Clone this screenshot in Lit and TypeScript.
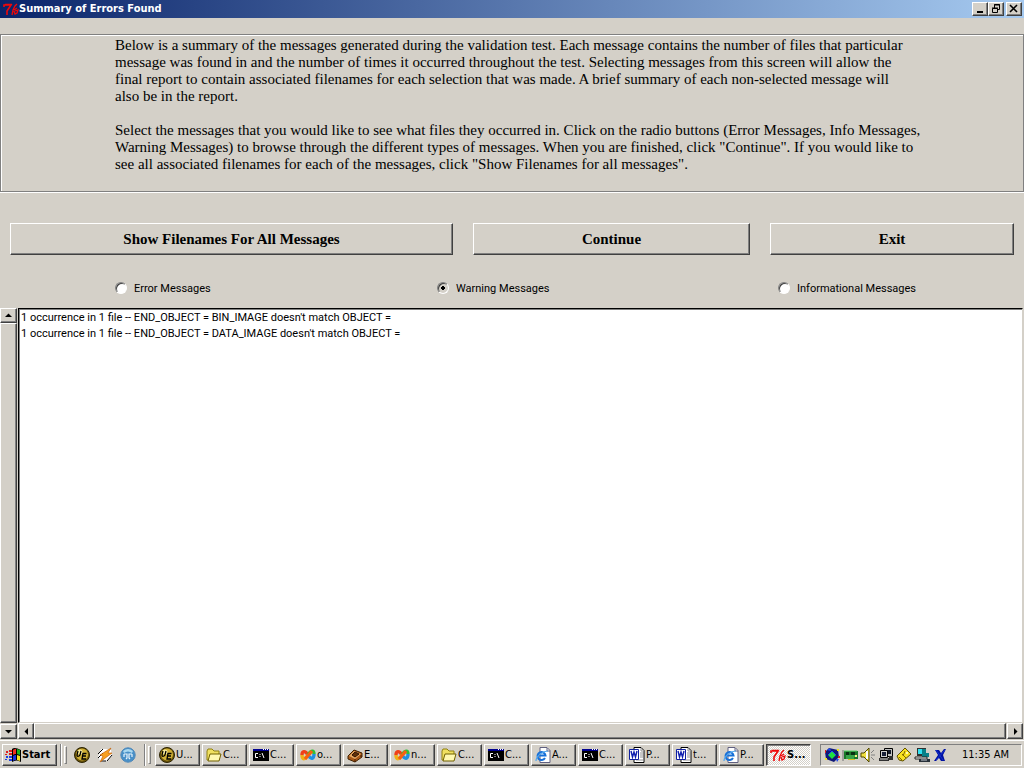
import { LitElement, html, css, svg } from "lit";
import { customElement, property, state } from "lit/decorators.js";

const art: Record<string, unknown> = {
  tk: svg`<path d="M1 6V4h7L6 7L4 10v4M2 3.500h7" fill="none" stroke="#f00808" stroke-width="1.600"/><path d="M14 3l-2 2-2 4-1 5M14 7l-3 2M11 10l1 3 2-1 1-3-3 1" fill="none" stroke="#f00808" stroke-width="1.300"/>`,
  win: svg`<g stroke="none"><path d="M7 2c2-2 5-1 9 1v12c-3-2-6-2-9 0z" fill="#000"/><path d="M8 3c1-1 2-1 3-1v5c-1 0-2 0-3 1z" fill="#f03020"/><path d="M12 2l3 1v5l-3-1z" fill="#18b020"/><path d="M8 9c1-1 2-1 3-1v5c-1 0-2 0-3 1z" fill="#1830e0"/><path d="M12 8l3 1v5l-3-1z" fill="#f8e020"/><path d="M1 4h2v2H1zM4 3h3v2H4zM0 7h2v1H0zM4 6h3v2H4z" fill="#e02020"/><path d="M1 9h2v2H1zM4 9h3v2H4zM0 12h2v1H0zM4 12h3v2H4z" fill="#2040e0"/></g>`,
  ue: svg`<circle cx="8" cy="8" r="7.500" fill="#6a5408" stroke="#2c2404"/><circle cx="8" cy="7.500" r="6" fill="#d0b038"/><circle cx="6" cy="5" r="2.500" fill="#f8eca0"/><path d="M4 4L3 8q0 2 2 1l1-1 1-4M12.500 6.500H9L8 12h4M8.500 9H12" fill="none" stroke="#000" stroke-width="1.300"/>`,
  bolt: svg`<path d="M4 2h5l5 1 1 6-5 5-6 1-3-5z" fill="#fff"/><path d="M6 2L1 7M15 8l-5 6M1 11l5-5M9 14H4" stroke="#000"/><path d="M3 8l11-7-3 5h4L3 15l3-6z" fill="#f8a020" stroke="#c05800" stroke-width=".6"/>`,
  phones: svg`<circle cx="8" cy="8" r="7.200" fill="#4890c8" stroke="#5088b8"/><path d="M3 4q5-4 10 0l-1 2q-4-3-8 0z" fill="#a8d8f0"/><path d="M4 7h3v4l-1 1M12 7H9v4l1 1M4 7v3M12 7v3" fill="none" stroke="#e8f4fc" stroke-width="1.200"/>`,
  folder: svg`<path d="M1 13V4l1-2h4l2 2h5v9z" fill="#f0e060" stroke="#908010"/><path d="M4 7h11l-2 7H2z" fill="#fff8b0" stroke="#706000"/>`,
  cmd: svg`<path d="M0 2h16v12H0z" fill="#000"/><path d="M0 2h16v2H0z" fill="#000090"/><path d="M10 2h1v1h-1zM12 2h1v1h-1zM14 2h1v1h-1z" fill="#fff"/><path d="M5 6.500H2.500v4H5M7 7v1M7 9v1M9 6l2 5" stroke="#fff" fill="none"/>`,
  loop: svg`<g fill="none" stroke-width="3.400"><path d="M8 8C5 3 2 4 2 8" stroke="#f04018"/><path d="M2 8c0 5 3 5 6 0" stroke="#f0b018"/><path d="M8 8c3-5 6-5 6-1" stroke="#30c038"/><path d="M14 7c0 5-3 6-6 1" stroke="#2090e0"/><path d="M5 12l7-8" stroke="#f86010"/></g>`,
  box: svg`<path d="M1 9l6-6 8 3v4l-7 5-7-3z" fill="#a85818" stroke="#402000"/><path d="M2 9l5-5 7 3-6 5z" fill="#e8a860"/><path d="M5 8l3-3 4 2-4 3z" fill="#603008" stroke="#301000"/><path d="M8 12v3M14 8v2" stroke="#401800"/>`,
  ie: svg`<path d="M5 .500h7l3 3v12H5z" fill="#fff" stroke="#606080"/><path d="M12 1v3h3" fill="none" stroke="#606080"/><path d="M10 11a4 4 0 1 1 .500-2.500H3" fill="none" stroke="#1870d8" stroke-width="2"/><path d="M1 14C1 9 8 4 13 4" fill="none" stroke="#50a8f0" stroke-width="1.200"/>`,
  word: svg`<path d="M5 .500h7l3 3v12H5z" fill="#fff" stroke="#000"/><path d="M12 1v3h3M11 6h3M11 8h3M11 10h3M7 13h7" fill="none" stroke="#909090"/><path d="M.500 2.500h9v10h-9z" fill="#fff" stroke="#1020a0"/><path d="M2 4l1.500 6L5 5l1.500 5L8 4" fill="none" stroke="#1020b0" stroke-width="1.400"/>`,
  globe: svg`<path d="M5 1l9 2 1 7-5 5-8-3-1-7z" fill="#101878"/><path d="M8 4l4 4-4 4-4-4z" fill="#20e040"/><path d="M4 8l4-4 4 4" stroke="#2048f0" fill="none"/><path d="M3 3l3-2 1 3zM12 12l3 0-2 3z" fill="#2048f0"/><path d="M13 2h2v2h-2zM1 11h2v2H1z" fill="#f0e820"/><path d="M1 3h1v3H1zM14 9h2v2h-2z" fill="#e02020"/>`,
  card: svg`<path d="M2 4h14v8H2z" fill="#187828"/><path d="M4 5h3v3H4zM9 5h4v3H9z" fill="#083010"/><path d="M2 4h13M4 9h9M4 11h8" stroke="#58d068"/><path d="M1 3v11" stroke="#707070"/><path d="M6 12h7v1H6z" fill="#d8c020"/><path d="M13 8h2v2h-2z" fill="#f8f080"/>`,
  sound: svg`<path d="M1 6h3l5-5v14l-5-5H1z" fill="#f0e040" stroke="#504800"/><path d="M7 4v8" stroke="#fff" stroke-width="2"/><path d="M11 6l3-3M11 8h4M11 10l3 3" stroke="#808080"/>`,
  net: svg`<path d="M6.500 1.500h8v8h-8z" fill="#c0c0c0" stroke="#000"/><path d="M8 3h5v4H8z" fill="#101828"/><path d="M2.500 3.500h7v7h-7z" fill="#d0d0d0" stroke="#000"/><path d="M4 5h4v4H4z" fill="#182038"/><path d="M1 11h10v3H1zM11 9h4v4h-4z" fill="#303030"/><path d="M2 12h8" stroke="#d0d0d0"/>`,
  tag: svg`<path d="M1 9l8-8 6 6-8 7-4-1z" fill="#f8e020" stroke="#605000"/><path d="M3 10l3 3M6 7l4 4M9 4l-2 5" stroke="#806800"/><path d="M10 5h2v2h-2z" fill="#fff8b0"/>`,
  pc: svg`<path d="M3 1h9v8H3z" fill="#303030"/><path d="M4 2h6v5H4z" fill="#30e0f0"/><path d="M8 2h4v4h3v4H8z" fill="#088088"/><path d="M1 10h12v2H1z" fill="#fff" stroke="#202020"/><path d="M5 12h11v3H5z" fill="#283038"/><path d="M7 13h6" stroke="#c0c8d0"/>`,
  cross: svg`<path d="M3 3h4l2 3 3-4h2l-3 6 2 6H9l-2-3-3 3H2l4-6z" fill="#0010a0"/><path d="M4 3l7 10M13 3L4 13" stroke="#1030d0"/>`,
};

@customElement("pixel-icon")
export class PixelIcon extends LitElement {
  @property() name = "";
  static styles = css`
    :host { display: block; flex: none; width: 16px; height: 16px; }
    svg { display: block; width: 100%; height: 100%; }
  `;
  render() {
    return html`<svg viewBox="0 0 16 16" aria-hidden="true">${art[this.name]}</svg>`;
  }
}

const INTRO = [
  `Below is a summary of the messages generated during the validation test. Each message contains the number of files that particular
message was found in and the number of times it occurred throughout the test. Selecting messages from this screen will allow the
final report to contain associated filenames for each selection that was made. A brief summary of each non-selected message will
also be in the report.`,
  `Select the messages that you would like to see what files they occurred in. Click on the radio buttons (Error Messages, Info Messages,
Warning Messages) to browse through the different types of messages. When you are finished, click "Continue". If you would like to
see all associated filenames for each of the messages, click "Show Filenames for all messages".`,
];

const KINDS = ["Error Messages", "Warning Messages", "Informational Messages"];

const MESSAGES: Record<string, string[]> = {
  "Warning Messages": [
    "1 occurrence in 1 file -- END_OBJECT = BIN_IMAGE doesn't match OBJECT =",
    "1 occurrence in 1 file -- END_OBJECT = DATA_IMAGE doesn't match OBJECT =",
  ],
};

const TASKS = [
  ["ue", "U..."], ["folder", "C..."], ["cmd", "C..."], ["loop", "o..."], ["box", "E..."],
  ["loop", "n..."], ["folder", "C..."], ["cmd", "C..."], ["ie", "A..."], ["cmd", "C..."],
  ["word", "P..."], ["word", "t..."], ["ie", "P..."], ["tk", "S..."],
];

const TRAY = ["globe", "card", "sound", "net", "tag", "pc", "cross"];

const arrow = (d: string) => html`<svg class="arrow" viewBox="0 0 7 7" aria-hidden="true"><path d=${d} /></svg>`;

@customElement("app-root")
export class AppRoot extends LitElement {
  @state() private kind = "Warning Messages";

  static styles = css`
    :host {
      display: flex;
      flex-direction: column;
      min-height: 100vh;
      box-sizing: border-box;
      background: #d4d0c8;
      color: #000;
      font: 11px/16px Roboto, "Liberation Sans", Arial, sans-serif;
    }
    * { box-sizing: border-box; }
    button { margin: 0; padding: 0; font: inherit; color: inherit; background: #d4d0c8; }
    .raised {
      border: 1px solid;
      border-color: #fff #404040 #404040 #fff;
      box-shadow: inset -1px -1px #808080;
    }
    .titlebar {
      display: flex;
      align-items: center;
      height: 18px;
      padding: 0 2px 0 3px;
      background: linear-gradient(90deg, #0a246a, #a6caf0);
      color: #fff;
    }
    .title {
      flex: 1;
      margin: 0;
      font: bold 11px/18px "DejaVu Sans Condensed", "DejaVu Sans", sans-serif;
    }
    .caption { display: flex; align-items: center; justify-content: center; width: 16px; height: 14px; }
    .caption svg { width: 10px; height: 10px; display: block; fill: none; stroke: #000; }
    .caption.close { margin-left: 2px; }
    .intro {
      margin-top: 16px;
      padding: 2px 0 18px 114px;
      border: 1px solid #808080;
      box-shadow: inset 1px 1px #fff, 0 1px #fff;
      font: 15px/17px "Liberation Serif", "Times New Roman", serif;
    }
    .intro p { margin: 0 0 17px; white-space: pre-line; }
    .intro p:last-child { margin: 0; }
    .actions {
      display: grid;
      grid-template-columns: 443fr 277fr 244fr;
      gap: 20px;
      margin: 31px 10px 0;
    }
    .action { height: 32px; font: bold 15px/17px "Liberation Serif", "Times New Roman", serif; }
    .kinds {
      display: grid;
      grid-template-columns: 322fr 341fr 246fr;
      margin: 25px 0 11px;
      padding-left: 115px;
    }
    .kind { display: flex; align-items: center; gap: 7px; height: 17px; }
    .radio {
      appearance: none;
      width: 12px;
      height: 12px;
      margin: 0 0 2px;
      border: 1px solid;
      border-color: #808080 #fff #fff #808080;
      border-radius: 50%;
      background: #fff;
      box-shadow: inset 1px 1px #404040;
    }
    .radio:checked { background: radial-gradient(circle at center, #000 2px, #d4d0c8 2px); }
    .viewer {
      flex: 1;
      display: grid;
      grid-template-columns: 18px 1fr;
      grid-template-rows: 1fr 16px;
      min-height: 0;
      padding-right: 1px;
    }
    .vbar { grid-row: 1 / 3; display: flex; flex-direction: column; padding-right: 1px; }
    .hbar { display: flex; }
    .step { display: flex; flex: none; align-items: center; justify-content: center; width: 16px; height: 16px; }
    .vbar .step { width: 17px; height: 15px; }
    .thumb { flex: 1; }
    .hbar .thumb { margin-right: 1px; }
    .vbar .thumb { margin-bottom: 1px; }
    .arrow { width: 7px; height: 7px; display: block; }
    .list {
      appearance: none;
      width: 100%;
      height: 100%;
      margin: 0;
      padding: 1px 1px 0;
      overflow: hidden;
      outline: 0;
      border: 1px solid;
      border-color: #000 #d4d0c8 #d4d0c8 #000;
      border-radius: 0;
      background: #fff;
      box-shadow: inset 1px 1px #808080;
      font: inherit;
      color: #000;
    }
    .option { height: 16px; min-height: 16px; padding: 1px 1px 0; line-height: 16px; font-size: 11px; }
    .taskbar {
      display: flex;
      align-items: center;
      gap: 2px;
      height: 28px;
      margin-top: 1px;
      padding: 2px 2px 1px;
      border-top: 1px solid #fff;
      font: 11px/16px "DejaVu Sans Condensed", "DejaVu Sans", sans-serif;
    }
    .start { display: flex; align-items: center; gap: 1px; width: 55px; height: 22px; padding: 0 2px; font-weight: bold; }
    .divider { width: 1px; height: 22px; margin: 0 1px; background: #808080; box-shadow: 1px 0 #fff; }
    .grip { width: 3px; height: 18px; border: 1px solid; border-color: #fff #808080 #808080 #fff; }
    .quick { display: flex; gap: 7px; margin: 0 5px 0 5px; }
    .launch { border: 0; }
    .tasks { display: flex; flex: 1; gap: 2px; margin: 0 6px 0 2px; min-width: 0; }
    .task { display: flex; align-items: center; gap: 1px; flex: 0 1 45px; min-width: 0; height: 22px; padding: 0 0 0 3px; overflow: hidden; }
    .task.active {
      font-weight: bold;
      border-color: #404040 #fff #fff #404040;
      box-shadow: inset 1px 1px #808080;
      background: repeating-conic-gradient(#fff 0 25%, #d4d0c8 0 50%) 0 0 / 2px 2px;
    }
    .tray {
      display: flex;
      flex: none;
      align-items: center;
      gap: 2px;
      height: 22px;
      width: 202px;
      padding: 0 12px 0 3px;
      border: 1px solid;
      border-color: #808080 #fff #fff #808080;
    }
    .clock { margin-left: auto; white-space: nowrap; }
  `;

  render() {
    return html`
      <header class="titlebar">
        <pixel-icon name="tk"></pixel-icon>
        <h1 class="title">Summary of Errors Found</h1>
        <button class="caption raised" aria-label="Minimize"><svg viewBox="0 0 10 10"><path d="M2 8h6" stroke-width="2" /></svg></button>
        <button class="caption raised" aria-label="Restore"><svg viewBox="0 0 10 10"><path d="M3.500 4V.500h5v5H7M3 1h6M1.500 4.500h5v4h-5zM1 4h6" /></svg></button>
        <button class="caption close raised" aria-label="Close"><svg viewBox="0 0 10 10"><path d="M1 1l7 7M8 1L1 8" stroke-width="1.600" /></svg></button>
      </header>
      <section class="intro">${INTRO.map((t) => html`<p>${t}</p>`)}</section>
      <div class="actions">
        <button class="action raised">Show Filenames For All Messages</button>
        <button class="action raised">Continue</button>
        <button class="action raised">Exit</button>
      </div>
      <div class="kinds" role="radiogroup" aria-label="Message type">
        ${KINDS.map((k) => html`<label class="kind"><input class="radio" type="radio" name="kind"
          .checked=${this.kind === k} @change=${() => (this.kind = k)} />${k}</label>`)}
      </div>
      <main class="viewer">
        <div class="vbar">
          <button class="step raised" aria-label="Scroll up">${arrow("M0 5h7L3.500 1.500z")}</button>
          <div class="thumb raised"></div>
          <button class="step raised" aria-label="Scroll down">${arrow("M0 2h7L3.500 5.500z")}</button>
        </div>
        <select class="list" multiple size="20" aria-label="Messages">
          ${(MESSAGES[this.kind] ?? []).map((m) => html`<option class="option">${m}</option>`)}
        </select>
        <div class="hbar">
          <button class="step raised" aria-label="Scroll left">${arrow("M5 0v7L1.500 3.500z")}</button>
          <div class="thumb raised"></div>
          <button class="step raised" aria-label="Scroll right">${arrow("M2 0v7L5.500 3.500z")}</button>
        </div>
      </main>
      <footer class="taskbar">
        <button class="start raised"><pixel-icon name="win"></pixel-icon>Start</button>
        <span class="divider"></span><span class="grip"></span>
        <div class="quick">
          ${["ue", "bolt", "phones"].map((n) => html`<button class="launch" aria-label=${n}><pixel-icon name=${n}></pixel-icon></button>`)}
        </div>
        <span class="divider"></span><span class="grip"></span>
        <nav class="tasks">
          ${TASKS.map(([icon, text]) => html`<button class="task raised ${icon === "tk" ? "active" : ""}"><pixel-icon name=${icon}></pixel-icon>${text}</button>`)}
        </nav>
        <div class="tray">
          ${TRAY.map((n) => html`<pixel-icon name=${n}></pixel-icon>`)}
          <time class="clock">11:35 AM</time>
        </div>
      </footer>
    `;
  }
}
